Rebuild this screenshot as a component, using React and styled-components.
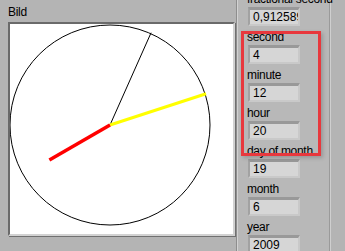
import React from 'react'
import styled, { createGlobalStyle } from 'styled-components'

const GlobalStyle = createGlobalStyle`
  html, body {
    margin: 0;
    padding: 0;
    background: #b4b4b4;
  }
  body {
    font-family: "Liberation Sans", Arial, sans-serif;
  }
`

const Panel = styled.div`
  width: 345px;
  height: 251px;
  overflow: hidden;
  display: flex;
  background: #b4b4b4;
  color: #000;
  font-size: 12px;
  line-height: 14px;
  letter-spacing: -0.3px;
  position: relative;
`

const PictureArea = styled.div`
  padding: 5px 0 0 8px;
  width: 229px;
  flex: none;
  box-sizing: border-box;
`

const Label = styled.div`
  height: 14px;
  white-space: nowrap;
`

const PictureFrame = styled.div`
  margin-top: 3px;
  width: 227px;
  height: 214px;
  box-sizing: border-box;
  border-style: solid;
  border-width: 2px;
  border-color: #6a6a6a #d2d2d2 #d2d2d2 #6a6a6a;
  box-shadow: 1px 1px 0 #707070;
  background: #fff;

  svg {
    display: block;
  }
`

const Cluster = styled.div`
  width: 93px;
  margin-left: 8px;
  height: 100%;
  box-sizing: border-box;
  border-left: 1px solid #d2d2d2;
  border-right: 1px solid #9a9a9a;
  box-shadow: -1px 0 0 #8e8e8e, 1px 0 0 #cfcfcf;
  background: #b8b8b8;
  padding-left: 9px;
`

const Stack = styled.div`
  margin-top: -8px;
  display: flex;
  flex-direction: column;
  gap: 4px;
`

const Group = styled.div`
  display: flex;
  flex-direction: column;
  gap: 1px;
`

const Field = styled.div`
  margin-left: 1px;
  width: 52px;
  height: 19px;
  box-sizing: border-box;
  border-style: solid;
  border-width: 3px 2px 2px 2px;
  border-color: #999 #c9c9c9 #c9c9c9 #a2a2a2;
  background: #d6d6d6;
  padding: 0 0 0 3px;
  line-height: 14px;
  letter-spacing: 0;
  white-space: nowrap;
  overflow: hidden;
`

const Highlight = styled.div`
  position: absolute;
  left: 241px;
  top: 31px;
  width: 80px;
  height: 125px;
  box-sizing: border-box;
  border: 3px solid #e8383d;
  box-shadow: 2px 2px 4px rgba(0, 0, 0, 0.18);
  pointer-events: none;
`

const fields = [
  { label: 'fractional second', value: '0,912589' },
  { label: 'second', value: '4' },
  { label: 'minute', value: '12' },
  { label: 'hour', value: '20' },
  { label: 'day of month', value: '19' },
  { label: 'month', value: '6' },
  { label: 'year', value: '2009' },
]

function hand(cx, cy, deg, len) {
  const r = (deg * Math.PI) / 180
  return { x1: cx, y1: cy, x2: cx + len * Math.sin(r), y2: cy - len * Math.cos(r) }
}

function Clock({ second, minute, hour }) {
  const cx = 100
  const cy = 101
  return (
    <svg width="223" height="210" viewBox="0 0 223 210">
      <circle cx={cx} cy={cy} r="100" fill="none" stroke="#000" strokeWidth="1" />
      <line {...hand(cx, cy, second * 6, 101)} stroke="#000" strokeWidth="1" />
      <line {...hand(cx, cy, minute * 6, 101)} stroke="#ffff00" strokeWidth="3" />
      <line {...hand(cx, cy, (hour % 12) * 30, 70)} stroke="#ff0000" strokeWidth="3.5" />
    </svg>
  )
}

export default function App() {
  return (
    <>
      <GlobalStyle />
      <Panel>
        <PictureArea>
          <Label>Bild</Label>
          <PictureFrame>
            <Clock second={4} minute={12} hour={20} />
          </PictureFrame>
        </PictureArea>
        <Cluster>
          <Stack>
            {fields.map((f) => (
              <Group key={f.label}>
                <Label>{f.label}</Label>
                <Field>{f.value}</Field>
              </Group>
            ))}
          </Stack>
        </Cluster>
        <Highlight />
      </Panel>
    </>
  )
}
